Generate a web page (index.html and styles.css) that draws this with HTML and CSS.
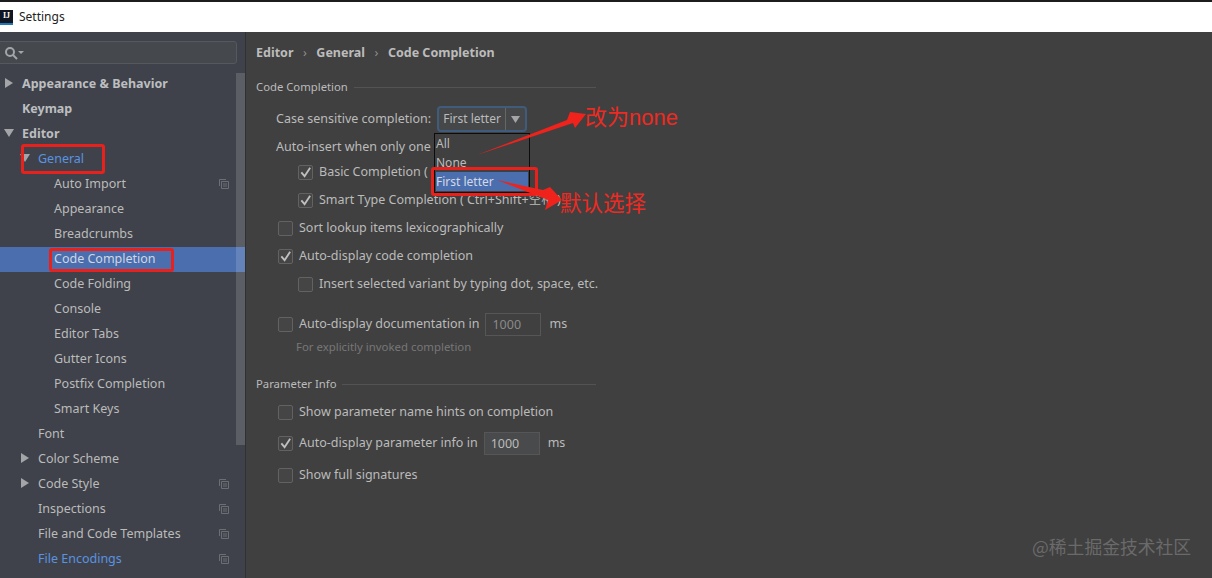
FILE: index.html
```html
<!DOCTYPE html>
<html lang="en">
<head>
<meta charset="utf-8">
<title>Settings</title>
<link rel="stylesheet" href="styles.css">
</head>
<body>
<svg class="defs" width="0" height="0" aria-hidden="true">
  <symbol id="copy" viewBox="0 0 10 10"><path d="M0.5 7V0.5H7M2.5 2.5h7v7h-7zM4 5h4M4 7h4" fill="none" stroke="#6b6e73" stroke-width="1"/></symbol>
  <symbol id="right" viewBox="0 0 10 10"><path d="M1 0l8 5-8 5z" fill="#a3a5a8"/></symbol>
  <symbol id="down" viewBox="0 0 10 10"><path d="M0 1h10l-5 8z" fill="#a3a5a8"/></symbol>
  <symbol id="tick" viewBox="0 0 14 14"><path d="M2.5 7.5l3.5 4L12 2.5" fill="none" stroke="#c0c0c0" stroke-width="2"/></symbol>
</svg>
<header class="titlebar">
  <span class="logo">IJ</span>
  <span class="title">Settings</span>
</header>
<div class="window">
  <aside class="sidebar">
    <div class="search">
      <svg class="search-icon" width="20" height="14" viewBox="0 0 20 14"><circle cx="6" cy="6" r="4" fill="none" stroke="#a3a5a8" stroke-width="2"/><path d="M9 9l4 4" stroke="#a3a5a8" stroke-width="2"/><path d="M14 5h6l-3 3z" fill="#a3a5a8"/></svg>
    </div>
    <div class="tree-wrap">
      <nav class="tree">
        <div class="node top"><svg class="arrow"><use href="#right"/></svg>Appearance &amp; Behavior</div>
        <div class="node top">Keymap</div>
        <div class="node top"><svg class="arrow"><use href="#down"/></svg>Editor</div>
        <div class="node lvl1 link"><svg class="arrow"><use href="#down"/></svg>General</div>
        <div class="node lvl2">Auto Import<svg class="copy"><use href="#copy"/></svg></div>
        <div class="node lvl2">Appearance</div>
        <div class="node lvl2">Breadcrumbs</div>
        <div class="node lvl2 selected">Code Completion</div>
        <div class="node lvl2">Code Folding</div>
        <div class="node lvl2">Console</div>
        <div class="node lvl2">Editor Tabs</div>
        <div class="node lvl2">Gutter Icons</div>
        <div class="node lvl2">Postfix Completion</div>
        <div class="node lvl2">Smart Keys</div>
        <div class="node lvl1">Font</div>
        <div class="node lvl1"><svg class="arrow"><use href="#right"/></svg>Color Scheme</div>
        <div class="node lvl1"><svg class="arrow"><use href="#right"/></svg>Code Style<svg class="copy"><use href="#copy"/></svg></div>
        <div class="node lvl1">Inspections<svg class="copy"><use href="#copy"/></svg></div>
        <div class="node lvl1">File and Code Templates<svg class="copy"><use href="#copy"/></svg></div>
        <div class="node lvl1 link">File Encodings<svg class="copy"><use href="#copy"/></svg></div>
      </nav>
      <div class="scrollbar"></div>
    </div>
  </aside>
  <main class="content">
    <div class="crumbs"><span>Editor</span><i>›</i><span>General</span><i>›</i><span>Code Completion</span></div>
    <div class="section first"><span>Code Completion</span><b></b></div>
    <div class="row r1">
      <span>Case sensitive completion:</span>
      <div class="combo"><span class="combo-value">First letter</span><span class="combo-btn"><svg width="9" height="9"><use href="#down"/></svg></span></div>
    </div>
    <div class="row r1"><span>Auto-insert when only one</span></div>
    <div class="row r2 short"><span class="check on"><svg width="14" height="14"><use href="#tick"/></svg></span><span>Basic Completion (</span></div>
    <div class="row r2"><span class="check on"><svg width="14" height="14"><use href="#tick"/></svg></span><span>Smart Type Completion ( Ctrl+Shift+空格 )</span></div>
    <div class="row r0"><span class="check"></span><span>Sort lookup items lexicographically</span></div>
    <div class="row r0"><span class="check on"><svg width="14" height="14"><use href="#tick"/></svg></span><span>Auto-display code completion</span></div>
    <div class="row r2"><span class="check"></span><span>Insert selected variant by typing dot, space, etc.</span></div>
    <div class="row r0 gap40"><span class="check"></span><span>Auto-display documentation in</span><span class="field dim">1000</span><span class="unit">ms</span></div>
    <div class="hint">For explicitly invoked completion</div>
    <div class="section second"><span>Parameter Info</span><b></b></div>
    <div class="row r0 after-section"><span class="check"></span><span>Show parameter name hints on completion</span></div>
    <div class="row r0 gap31"><span class="check on"><svg width="14" height="14"><use href="#tick"/></svg></span><span>Auto-display parameter info in</span><span class="field">1000</span><span class="unit">ms</span></div>
    <div class="row r0 gap32"><span class="check"></span><span>Show full signatures</span></div>
  </main>
</div>

<div class="popup">
  <div class="popup-item">All</div>
  <div class="popup-item">None</div>
  <div class="popup-item active">First letter</div>
</div>

<div class="mark mark-general"></div>
<div class="mark mark-code"></div>
<div class="mark mark-first"></div>
<svg class="arrows" width="1212" height="578" viewBox="0 0 1212 578" aria-hidden="true">
  <path d="M477 155L567 120l3-8 16 2-11 14-2-5z" fill="#f0221c"/>
  <path d="M497 180L543 190l7-3 12 13-17 10 3-10z" fill="#f0221c"/>
</svg>
<div class="note note-none">改为none</div>
<div class="note note-default">默认选择</div>
<div class="watermark">@稀土掘金技术社区</div>
</body>
</html>
```
FILE: styles.css
```css
* { box-sizing: border-box; }
html, body { margin: 0; height: 578px; overflow: hidden; }
body {
  position: relative;
  width: 1212px;
  background: #404040;
  color: #bbbbbb;
  font: 12.5px/18px "Noto Sans", "Noto Sans CJK SC", sans-serif;
  border-top: 2px solid #1c1c1c;
}
.defs { position: absolute; }

.titlebar {
  height: 30px;
  background: #ffffff;
  color: #222222;
  display: flex;
  align-items: center;
  gap: 6px;
  font-size: 12px;
}
.logo {
  width: 13px;
  height: 15px;
  background: #111722;
  border-bottom: 2px solid #1e78b8;
  color: #ffffff;
  font: bold 8px/11px "Liberation Serif", serif;
  text-align: center;
}

.window { display: flex; height: 546px; }
.sidebar {
  width: 246px;
  flex: none;
  background: #3f424a;
  border-right: 1px solid #2f3135;
  display: flex;
  flex-direction: column;
}
.search {
  height: 23px;
  margin: 9px 8px 0 -3px;
  border: 1px solid #55585d;
  border-radius: 3px;
  background: #45484d;
  display: flex;
  align-items: center;
  padding-left: 6px;
}
.tree-wrap { position: relative; flex: 1; padding-top: 8px; }
.node {
  position: relative;
  height: 25px;
  line-height: 23px;
  white-space: nowrap;
}
.top { padding-left: 22px; font-weight: 700; color: #bcbec0; }
.lvl1 { padding-left: 38px; }
.lvl2 { padding-left: 54px; }
.link { color: #5a93e0; }
.selected { background: #4b6eaf; color: #cfd6e2; }
.arrow { position: absolute; width: 10px; height: 10px; top: 6px; left: 4px; }
.lvl1 .arrow { left: 20px; }
.copy { position: absolute; width: 10px; height: 10px; top: 7px; left: 219px; }
.scrollbar {
  position: absolute;
  left: 236px;
  top: 9px;
  width: 9px;
  height: 372px;
  background: rgba(255, 255, 255, 0.15);
}

.content { flex: 1; padding-left: 10px; min-width: 0; }
.crumbs {
  height: 18px;
  margin-top: 12px;
  display: flex;
  gap: 9.5px;
  font-weight: 700;
  color: #bcbcbc;
  align-items: center;
}
.crumbs i { font-style: normal; font-weight: 400; color: #8f8f8f; }
.section {
  display: flex;
  align-items: center;
  gap: 6px;
  width: 340px;
  height: 18px;
  font-size: 11.3px;
}
.section b { flex: 1; height: 1px; background: #535353; }
.section.first { margin-top: 16px; }
.section.second { margin-top: 18px; }
.row { display: flex; align-items: center; height: 28px; white-space: nowrap; }
.r0 { padding-left: 22px; }
.r1 { padding-left: 20px; }
.r2 { padding-left: 42px; }
.short { margin-top: -3px; }
.gap40 { margin-top: 12px; }
.gap31 { margin-top: 3px; }
.gap32 { margin-top: 4px; }
.after-section { margin-top: 5px; }
.section.first + .row { margin-top: 9px; }
.check {
  width: 15px;
  height: 15px;
  flex: none;
  margin-right: 6px;
  border: 1px solid #626262;
  border-radius: 2px;
  background: #454545;
  display: flex;
  align-items: center;
  justify-content: center;
}
.combo {
  width: 90px;
  height: 26px;
  margin-left: 6px;
  border: 2px solid #3f5c7d;
  border-radius: 4px;
  background: #454749;
  display: flex;
  align-items: center;
}
.combo-value { flex: 1; padding-left: 4px; font-size: 12px; }
.combo-btn {
  width: 20px;
  height: 100%;
  border-left: 1px solid #666666;
  display: flex;
  align-items: center;
  justify-content: center;
}
.field {
  width: 56px;
  height: 23px;
  margin-left: 6px;
  padding-left: 6px;
  border: 1px solid #565656;
  background: #484a4b;
  line-height: 21px;
}
.field.dim { background: #404040; color: #8a8a8a; }
.unit { margin-left: 8px; }
.hint { height: 20px; line-height: 20px; margin: -1px 0 0 40px; font-size: 11.4px; color: #777777; }

.popup {
  position: absolute;
  left: 434px;
  top: 131px;
  width: 96px;
  height: 60px;
  border: 1px solid #0c0c0c;
  background: #404040;
  padding: 0 1px;
}
.popup-item { height: 19px; line-height: 19px; font-size: 12px; }
.popup-item.active { background: #4b6eaf; color: #d3d9e4; }

.mark { position: absolute; border: 3px solid #e8211c; border-radius: 3px; }
.mark-general { left: 21px; top: 142px; width: 84px; height: 30px; }
.mark-code { left: 49px; top: 246px; width: 125px; height: 24px; }
.mark-first { left: 431px; top: 165px; width: 107px; height: 29px; }
.arrows { position: absolute; left: 0; top: -2px; pointer-events: none; }
.note {
  position: absolute;
  color: #ee2a22;
  white-space: nowrap;
  font-family: "Liberation Sans", "Noto Sans CJK SC", sans-serif;
}
.note-none { left: 585px; top: 100px; font-size: 22px; line-height: 32px; }
.note-default { left: 560px; top: 186px; font-size: 21.5px; line-height: 32px; }
.watermark {
  position: absolute;
  left: 1032px;
  top: 532px;
  font: 17.8px/24px "Noto Sans CJK SC", sans-serif;
  color: #6a6a6a;
}
```
